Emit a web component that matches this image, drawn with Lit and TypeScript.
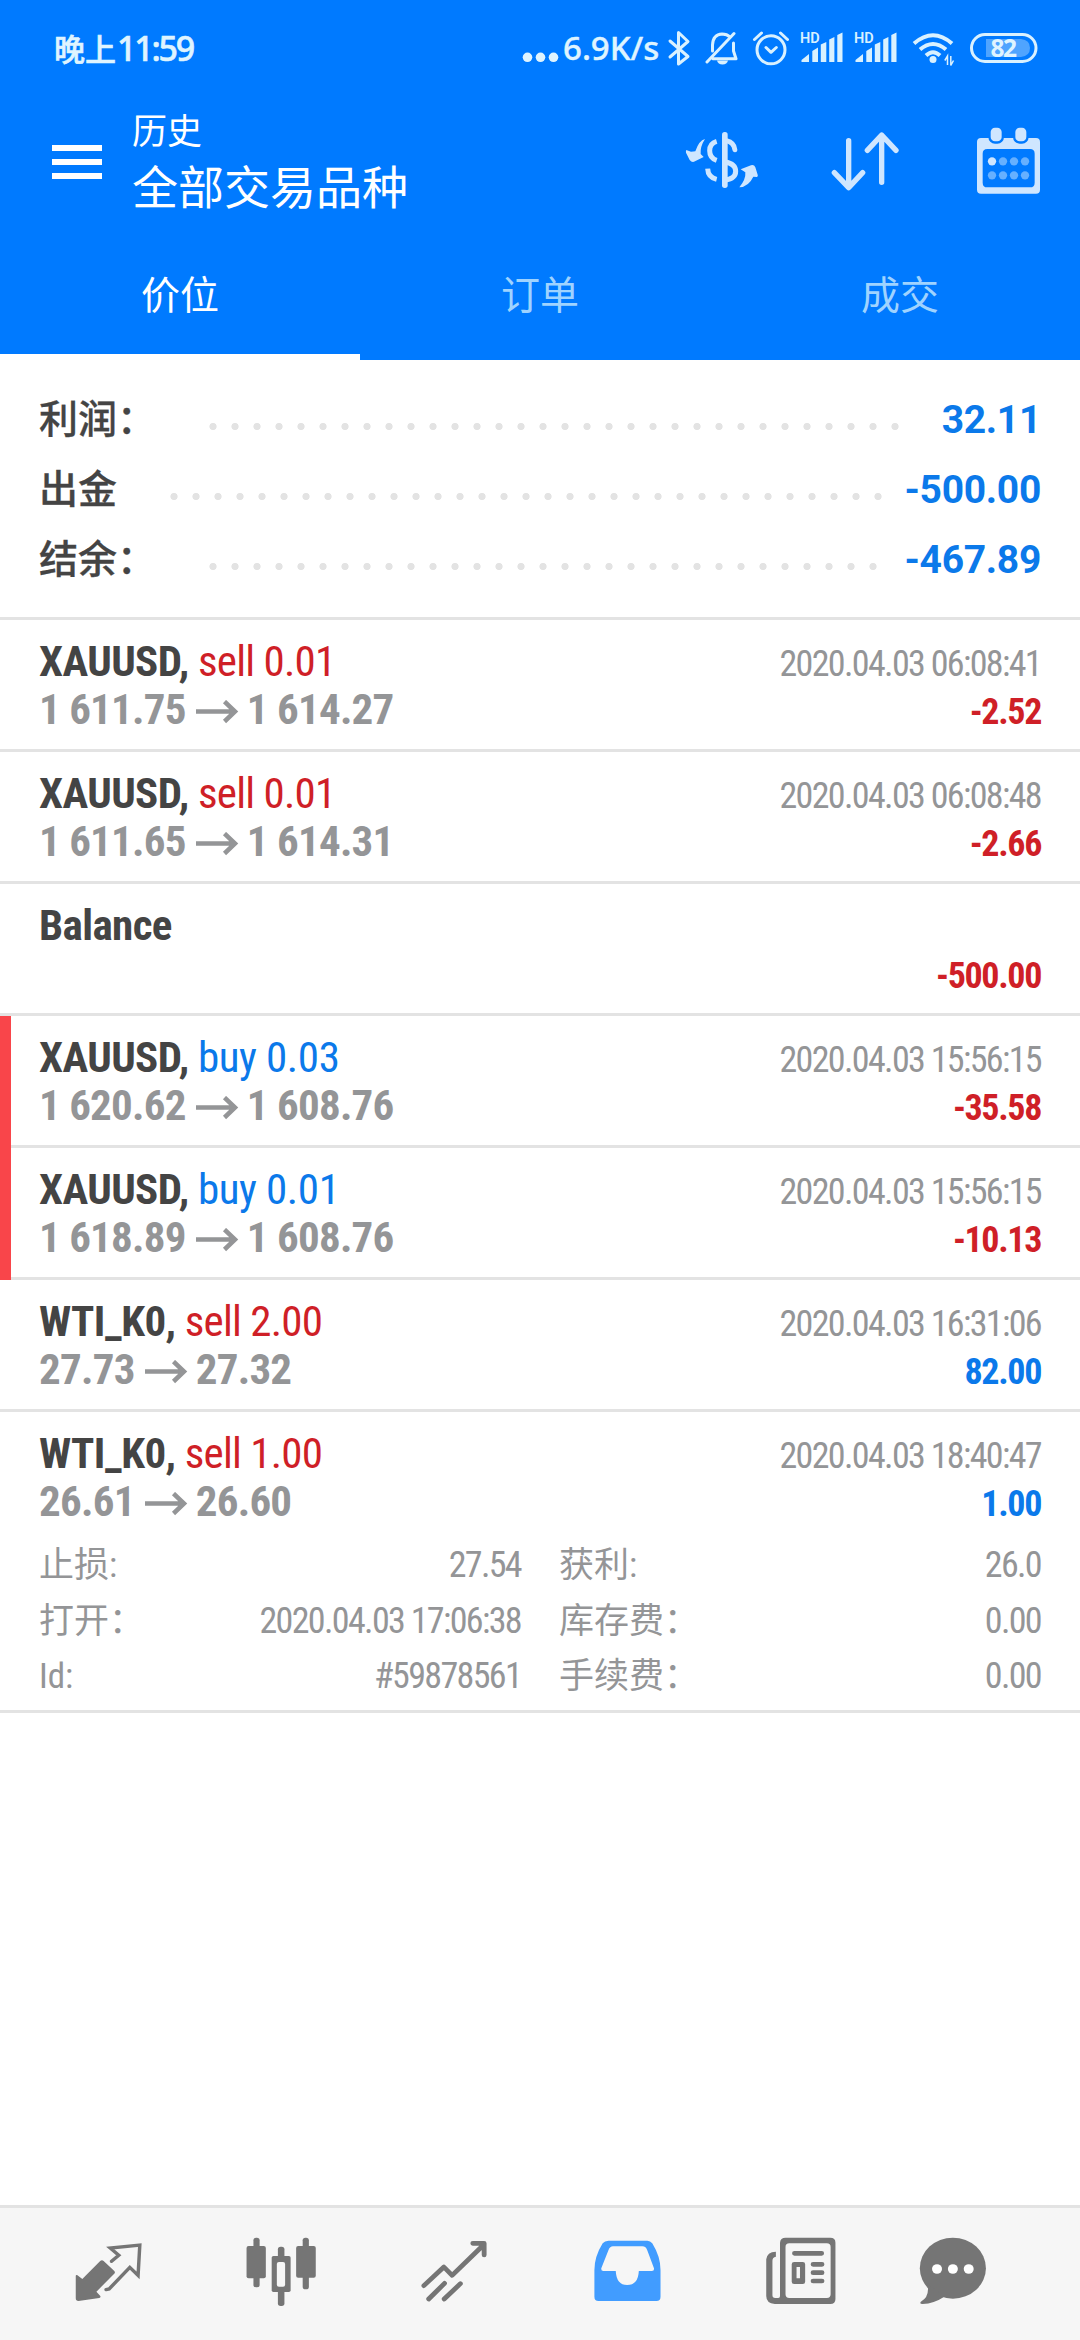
import { LitElement, html, svg, css, nothing } from "lit";
import { customElement, property } from "lit/decorators.js";

type Deal = {
  symbol: string;
  side?: "sell" | "buy";
  volume?: string;
  open?: string;
  close?: string;
  time?: string;
  profit: string;
  marked?: boolean;
  details?: [string, string, string, string][];
};

const SUMMARY = [
  { label: "利润：", dots: 32, value: "32.11" },
  { label: "出金", dots: 33, value: "-500.00" },
  { label: "结余：", dots: 31, value: "-467.89" },
];

const DEALS: Deal[] = [
  { symbol: "XAUUSD", side: "sell", volume: "0.01", open: "1 611.75", close: "1 614.27", time: "2020.04.03 06:08:41", profit: "-2.52" },
  { symbol: "XAUUSD", side: "sell", volume: "0.01", open: "1 611.65", close: "1 614.31", time: "2020.04.03 06:08:48", profit: "-2.66" },
  { symbol: "Balance", profit: "-500.00" },
  { symbol: "XAUUSD", side: "buy", volume: "0.03", open: "1 620.62", close: "1 608.76", time: "2020.04.03 15:56:15", profit: "-35.58", marked: true },
  { symbol: "XAUUSD", side: "buy", volume: "0.01", open: "1 618.89", close: "1 608.76", time: "2020.04.03 15:56:15", profit: "-10.13", marked: true },
  { symbol: "WTI_K0", side: "sell", volume: "2.00", open: "27.73", close: "27.32", time: "2020.04.03 16:31:06", profit: "82.00" },
  {
    symbol: "WTI_K0", side: "sell", volume: "1.00", open: "26.61", close: "26.60", time: "2020.04.03 18:40:47", profit: "1.00",
    details: [
      ["止损:", "27.54", "获利:", "26.0"],
      ["打开：", "2020.04.03 17:06:38", "库存费：", "0.00"],
      ["Id:", "#59878561", "手续费：", "0.00"],
    ],
  },
];

const signal = html`<svg class="signal" viewBox="800 0 44 96" width="44" height="96">
  <text x="800" y="43" class="hd">HD</text>
  <path fill="#d9f1ff" d="M801.500 62V60L809 54V62Z M812.300 62V51L818 47.500V62Z M820.800 62V44.500L826.300 42V62Z M829.200 62V39.500L834.400 37V62Z M837.300 62V35L842.500 32.500V62Z"/>
</svg>`;

@customElement("status-bar")
class StatusBar extends LitElement {
  static styles = css`
    :host { display: flex; height: 96px; color: #dff4ff; font-family: "Noto Sans", "Noto Sans CJK SC", sans-serif; font-weight: 500; }
    svg { display: block; flex: none; }
    .time { margin-left: 54px; line-height: 96px; font-size: 31px; white-space: nowrap; font-family: "Noto Sans CJK SC", sans-serif; -webkit-text-stroke: 0.6px #dff4ff; }
    .clock { font-family: "Noto Sans", sans-serif; font-size: 34px; letter-spacing: -2.2px; margin-left: 1px; }
    .right { margin-left: auto; display: flex; padding-right: 40px; }
    .rate { font-size: 33px; line-height: 96px; width: 103px; padding-left: 1px; white-space: nowrap; -webkit-text-stroke: 0.4px #dff4ff; }
    .line { fill: none; stroke: #d9f1ff; stroke-width: 3; stroke-linecap: round; stroke-linejoin: round; }
    .arcs { stroke-width: 4; stroke-linecap: butt; }
    .hd { font: 600 14.5px Roboto, sans-serif; fill: #d9f1ff; }
    .level { font: 700 24.5px "Noto Sans", sans-serif; fill: #dff4ff; letter-spacing: -1.6px; }
    .bell { margin-left: 13px; }
    .alarm { margin-left: 13px; }
    .signal { margin-left: 10px; }
    .wifi { margin-left: 13px; }
    .battery { margin-left: 12px; }
  `;
  render() {
    return html`
      <div class="time">晚上<span class="clock">11:59</span></div>
      <div class="right">
        <svg viewBox="522 0 40 96" width="40" height="96"><g fill="#dff4ff"><circle cx="527.500" cy="57.300" r="4.800"/><circle cx="540.500" cy="57.300" r="4.800"/><circle cx="553.500" cy="57.300" r="4.800"/></g></svg>
        <div class="rate">6.9K/s</div>
        <svg viewBox="666 0 26 96" width="26" height="96"><path class="line" d="M670 41L688 56.500L678.500 64V32.500L688 41.500L670 57"/></svg>
        <svg class="bell" viewBox="705 0 34 96" width="34" height="96"><path class="line" d="M712.500 51V45Q713 34.500 722 34Q727 34 730 37M733.500 43V51L736 58.700H713M707 62L734 33.500"/><path fill="#d9f1ff" d="M717 60.500H728Q727 64.500 722.500 64.500Q718 64.500 717 60.500Z"/></svg>
        <svg class="alarm" viewBox="752 0 38 96" width="38" height="96"><circle class="line" cx="771" cy="49.800" r="14"/><path class="line" d="M754.500 39.500L761.500 33M787.500 39.500L780.500 33M766 47.500L771 52.300L776.300 47.500"/></svg>
        ${signal}${signal}
        <svg class="wifi" viewBox="911 0 46 96" width="46" height="96">
          <path class="line arcs" d="M914 43.500Q933 27 952 43.500M920 49.500Q933 38.500 946 49.500M926 55.500Q933 49 940 55.500"/>
          <circle cx="933" cy="59.500" r="3.500" fill="#d9f1ff"/>
          <path fill="none" stroke="#d9f1ff" stroke-width="1.500" d="M947.500 65V56L944.800 60.500M950.800 56V65.500L953.500 60.500"/>
        </svg>
        <svg class="battery" viewBox="969 0 71 96" width="71" height="96">
          <rect x="971.500" y="34.500" width="64.500" height="27" rx="13.500" fill="none" stroke="#d9f1ff" stroke-width="3"/>
          <path fill="#4fa4ff" d="M986 39H1021Q1030 40 1030 48Q1030 56 1021 57H986Z"/>
          <text class="level" x="990.500" y="57">82</text>
        </svg>
      </div>`;
  }
}

@customElement("app-toolbar")
class AppToolbar extends LitElement {
  static styles = css`
    :host { display: flex; height: 140px; color: #fff; font-family: "Noto Sans CJK SC", sans-serif; box-sizing: border-box; padding: 0 32px 0 52px; }
    svg { display: block; flex: none; }
    .titles { display: flex; flex-direction: column; gap: 5px; padding: 11px 0 0 30px; margin-right: auto; white-space: nowrap; }
    .sub { font-size: 35px; line-height: 44px; }
    .title { font-size: 46px; line-height: 56px; }
    .currency { margin-right: 62px; }
    .sort { margin-right: 65px; }
    .tint { fill: #cfe6ff; }
    .stroke { fill: none; stroke: #cfe6ff; stroke-width: 15; }
    .round { stroke-linecap: round; stroke-linejoin: round; stroke-width: 16; }
    .soft { fill: #66b0ff; }
    .peg { fill: #cfe6ff; stroke: #007aff; stroke-width: 14; paint-order: stroke; }
  `;
  render() {
    const cols = [1056, 1089, 1122, 1155];
    return html`
      <svg viewBox="52 96 50 140" width="50" height="140"><path fill="#fff" d="M52 145h50v6h-50zM52 159h50v6h-50zM52 173h50v6h-50z"/></svg>
      <div class="titles"><div class="sub">历史</div><div class="title">全部交易品种</div></div>
      <svg class="currency" viewBox="120 18 252 420" width="84" height="140">
        <rect class="tint" x="246" y="126" width="17" height="168" rx="8"/>
        <path class="stroke" d="M230 154Q209 160 209 182Q209 204 230 211M203 236Q204 262 230 268M255 216Q287 221 287 244Q287 266 255 271"/>
        <path class="stroke" stroke-linecap="round" d="M259 152Q283 158 284.500 179"/>
        <path class="tint" d="M195 147Q177 151 166 184L153 185L139 180Q137 184 138 188L149 210Q156 219 165 214L191 201L182 192Q180 170 195 147ZM298 292Q326 290 340 260L351 261Q355 258 353 254L346 232Q342 223 333 226L302 238L316 247Q318 268 298 292Z"/>
      </svg>
      <svg class="sort" viewBox="558 18 237 420" width="79" height="140"><path class="stroke round" d="M626 152V292M583 248L626 293L668 248M725 277V136M682 181L725 135L768 181"/></svg>
      <svg viewBox="990 18 234 420" width="78" height="140">
        <path class="tint" fill-rule="evenodd" d="M1023 144H1188Q1200 144 1200 156V299Q1200 311 1188 311H1023Q1011 311 1011 299V156Q1011 144 1023 144ZM1042 177Q1028 177 1028 191V278Q1028 292 1042 292H1170Q1184 292 1184 278V191Q1184 177 1170 177Z"/>
        <rect class="peg" x="1052" y="113" width="33" height="41" rx="13"/><rect class="peg" x="1126" y="113" width="33" height="41" rx="13"/>
        ${cols.map((x, i) => svg`<circle class=${i ? "soft" : "tint"} cx=${x} cy="214" r="12.500"/><circle class="soft" cx=${x} cy="256" r="12.500"/>`)}
      </svg>`;
  }
}

@customElement("deal-row")
class DealRow extends LitElement {
  @property({ attribute: false }) deal!: Deal;
  static styles = css`
    :host { display: block; }
    .row { border-bottom: 3px solid #e3e3e3; padding: 17px 39px 16px 39px; color: #949597; font-family: "Roboto Condensed", Roboto, "Noto Sans CJK SC", sans-serif; font-stretch: 75%; white-space: nowrap; }
    .marked { background: linear-gradient(#f9454a, #f9454a) 0 0 / 11px 100% no-repeat border-box; border-image: linear-gradient(90deg, #f9454a 11px, #e3e3e3 11px) 0 0 3 0; }
    .line { display: flex; justify-content: space-between; align-items: baseline; height: 48px; line-height: 48px; font-size: 43px; letter-spacing: -0.75px; }
    .symbol { color: #444; font-weight: 700; letter-spacing: -0.6px; }
    .prices { font-weight: 700; }
    .arrow { width: 44px; height: 24px; margin: 0 7px 0 10px; }
    .sell, .loss { color: #cf1f27; }
    .buy, .gain { color: #0b79ea; }
    .buy { letter-spacing: -0.4px; }
    .time { font-size: 36px; letter-spacing: -1.65px; }
    .profit { font-size: 36px; letter-spacing: -1.35px; font-weight: 700; }
    .empty { display: flex; flex-direction: column; height: 96px; }
    .empty .profit { align-self: flex-end; line-height: 48px; margin-top: 3px; }
    .details { display: grid; grid-template-columns: 482px 482px; column-gap: 38px; padding-top: 13px; font-size: 36px; letter-spacing: -1.65px; line-height: 55.500px; }
    .pair { display: flex; justify-content: space-between; height: 55.500px; align-items: baseline; }
    .label { font-size: 35px; letter-spacing: 0; }
    .open { padding-bottom: 5px; }
  `;
  render() {
    const d = this.deal;
    const tone = d.profit.startsWith("-") ? "loss" : "gain";
    if (!d.side) {
      return html`<div class="row"><div class="empty">
        <div class="line"><span class="symbol">${d.symbol}</span></div>
        <span class="profit ${tone}">${d.profit}</span>
      </div></div>`;
    }
    return html`<div class="row ${d.marked ? "marked" : ""} ${d.details ? "open" : ""}">
      <div class="line"><span><span class="symbol">${d.symbol},</span> <span class=${d.side}>${d.side} ${d.volume}</span></span><span class="time">${d.time}</span></div>
      <div class="line"><span class="prices">${d.open}<svg class="arrow" viewBox="0 0 44 24"><path d="M0 11.500H39M28.500 1.500L39 11.500L28.500 21.500" fill="none" stroke="#949597" stroke-width="4.500"/></svg>${d.close}</span><span class="profit ${tone}">${d.profit}</span></div>
      ${d.details ? html`<div class="details">${d.details.map(([a, b, c, e]) => html`<div class="pair"><span class="label">${a}</span><span>${b}</span></div><div class="pair"><span class="label">${c}</span><span>${e}</span></div>`)}</div>` : nothing}
    </div>`;
  }
}

@customElement("bottom-nav")
class BottomNav extends LitElement {
  static styles = css`
    :host { display: grid; grid-template-columns: repeat(6, 173px); padding-left: 22px; height: 132px; border-top: 3px solid #e3e3e3; background: #f6f6f6; }
    svg { display: block; }
    .f { fill: #757575; }
    .s { fill: none; stroke: #757575; stroke-width: 14; stroke-linecap: round; stroke-linejoin: round; }
    .thin { stroke-width: 10; stroke-linejoin: miter; }
    .bare { fill: #f6f6f6; }
    .active { fill: #419cff; }
  `;
  icon(x: number, body: unknown) {
    return html`<svg viewBox="${x} 54 502.400 396" width="173" height="132" preserveAspectRatio="none">${body}</svg>`;
  }
  render() {
    return html`
      ${this.icon(63.9, svg`<path class="f" d="M291 213Q296 208 301 213L332 243Q336 248 331 252L280 305L292 319Q292 324 288 324L228 333Q220 333 220 325V258Q220 253 225 256L239 267Z"/><path class="s thin" d="M324 214L345 196L320 174L406 165L401 256L377 232L317 297L308 299"/>`)}
      ${this.icon(566.3, svg`<g class="f"><rect x="716" y="168" width="56" height="97" rx="6"/><rect x="736" y="143" width="18" height="149" rx="8"/><rect x="789" y="198" width="55" height="108" rx="5"/><rect x="807" y="170" width="19" height="178" rx="8"/><rect x="860" y="168" width="57" height="95" rx="6"/><rect x="879" y="143" width="18" height="155" rx="8"/></g><rect class="bare" x="804" y="216" width="24" height="74" rx="6"/>`)}
      ${this.icon(1068.7, svg`<path class="s" d="M1231 287L1289 231L1313 256L1404 165M1373 160H1406V195M1245 327L1291 280M1290 327L1337 281"/>`)}
      ${this.icon(2.9, svg`<path class="active" fill-rule="evenodd" d="M199 152H312Q320 152 326 160Q350 200 350 240V320Q350 333 338 333H170Q158 333 158 320V240Q158 200 182 160Q188 152 199 152ZM212 169Q203 169 199 180L178 235Q177 243 184 243H220Q222 285 253 285Q285 285 287 243H325Q332 243 331 235L312 182Q308 169 297 169Z"/>`)}
      ${this.icon(505.3, svg`<path class="f" fill-rule="evenodd" d="M713 143H843Q858 143 858 158V327Q858 342 843 342H682Q657 340 657 318V208Q659 186 685 185V200Q675 201 675 212V316Q675 324 683 324H692Q697 324 697 318V158Q698 143 713 143ZM724 160Q713 160 713 171V313Q713 324 724 324H833Q844 324 844 313V171Q844 160 833 160ZM738 216H763Q770 216 770 223V275Q770 282 763 282H738Q731 282 731 275V223Q731 216 738 216ZM745 231V265H755V231Z"/><path class="s" d="M739 190H818M793 223H819M793 248H819M793 273H819"/>`)}
      ${this.icon(1007.7, svg`<ellipse class="f" cx="1199" cy="234.500" rx="96" ry="91.500"/><path class="f" d="M1125 280Q1133 320 1106 335Q1101 342 1111 342Q1145 340 1174 320Z"/><g fill="#fff"><circle cx="1153" cy="237" r="14.500"/><circle cx="1199" cy="237" r="14.500"/><circle cx="1245" cy="237" r="14.500"/></g>`)}`;
  }
}

@customElement("app-root")
class AppRoot extends LitElement {
  static styles = css`
    :host { display: flex; flex-direction: column; width: 1080px; height: 2340px; background: #fff; overflow: hidden; }
    .header { background: #007aff; }
    .tabs { display: grid; grid-template-columns: repeat(3, 1fr); height: 124px; font: 39px/113px "Noto Sans CJK SC", sans-serif; text-align: center; color: #9fd3ff; }
    .tab { border-bottom: 6px solid transparent; }
    .selected { color: #fff; border-color: #fff; }
    .summary { padding: 23px 39px 24px; border-bottom: 3px solid #e3e3e3; }
    .sum { display: flex; height: 70px; line-height: 70px; }
    .name { font: 500 39px/66px "Noto Sans CJK SC", sans-serif; color: #444; -webkit-text-stroke: 0.3px #444; }
    .dots { margin-left: 45.600px; background: radial-gradient(circle at 11px 43.500px, #e3e3e3 3.200px, transparent 4px) 0 0 / 22px 70px repeat-x; }
    .value { margin-left: auto; font: 700 39px/75px Roboto, sans-serif; letter-spacing: -0.3px; color: #0b79ea; }
    .list { flex: 1; }
  `;
  render() {
    return html`
      <div class="header">
        <status-bar></status-bar>
        <app-toolbar></app-toolbar>
        <div class="tabs"><div class="tab selected">价位</div><div class="tab">订单</div><div class="tab">成交</div></div>
      </div>
      <div class="summary">${SUMMARY.map((s) => html`<div class="sum"><span class="name">${s.label}</span><span class="dots" style="width:${s.dots * 22}px"></span><span class="value">${s.value}</span></div>`)}</div>
      <div class="list">${DEALS.map((d) => html`<deal-row .deal=${d}></deal-row>`)}</div>
      <bottom-nav></bottom-nav>`;
  }
}
